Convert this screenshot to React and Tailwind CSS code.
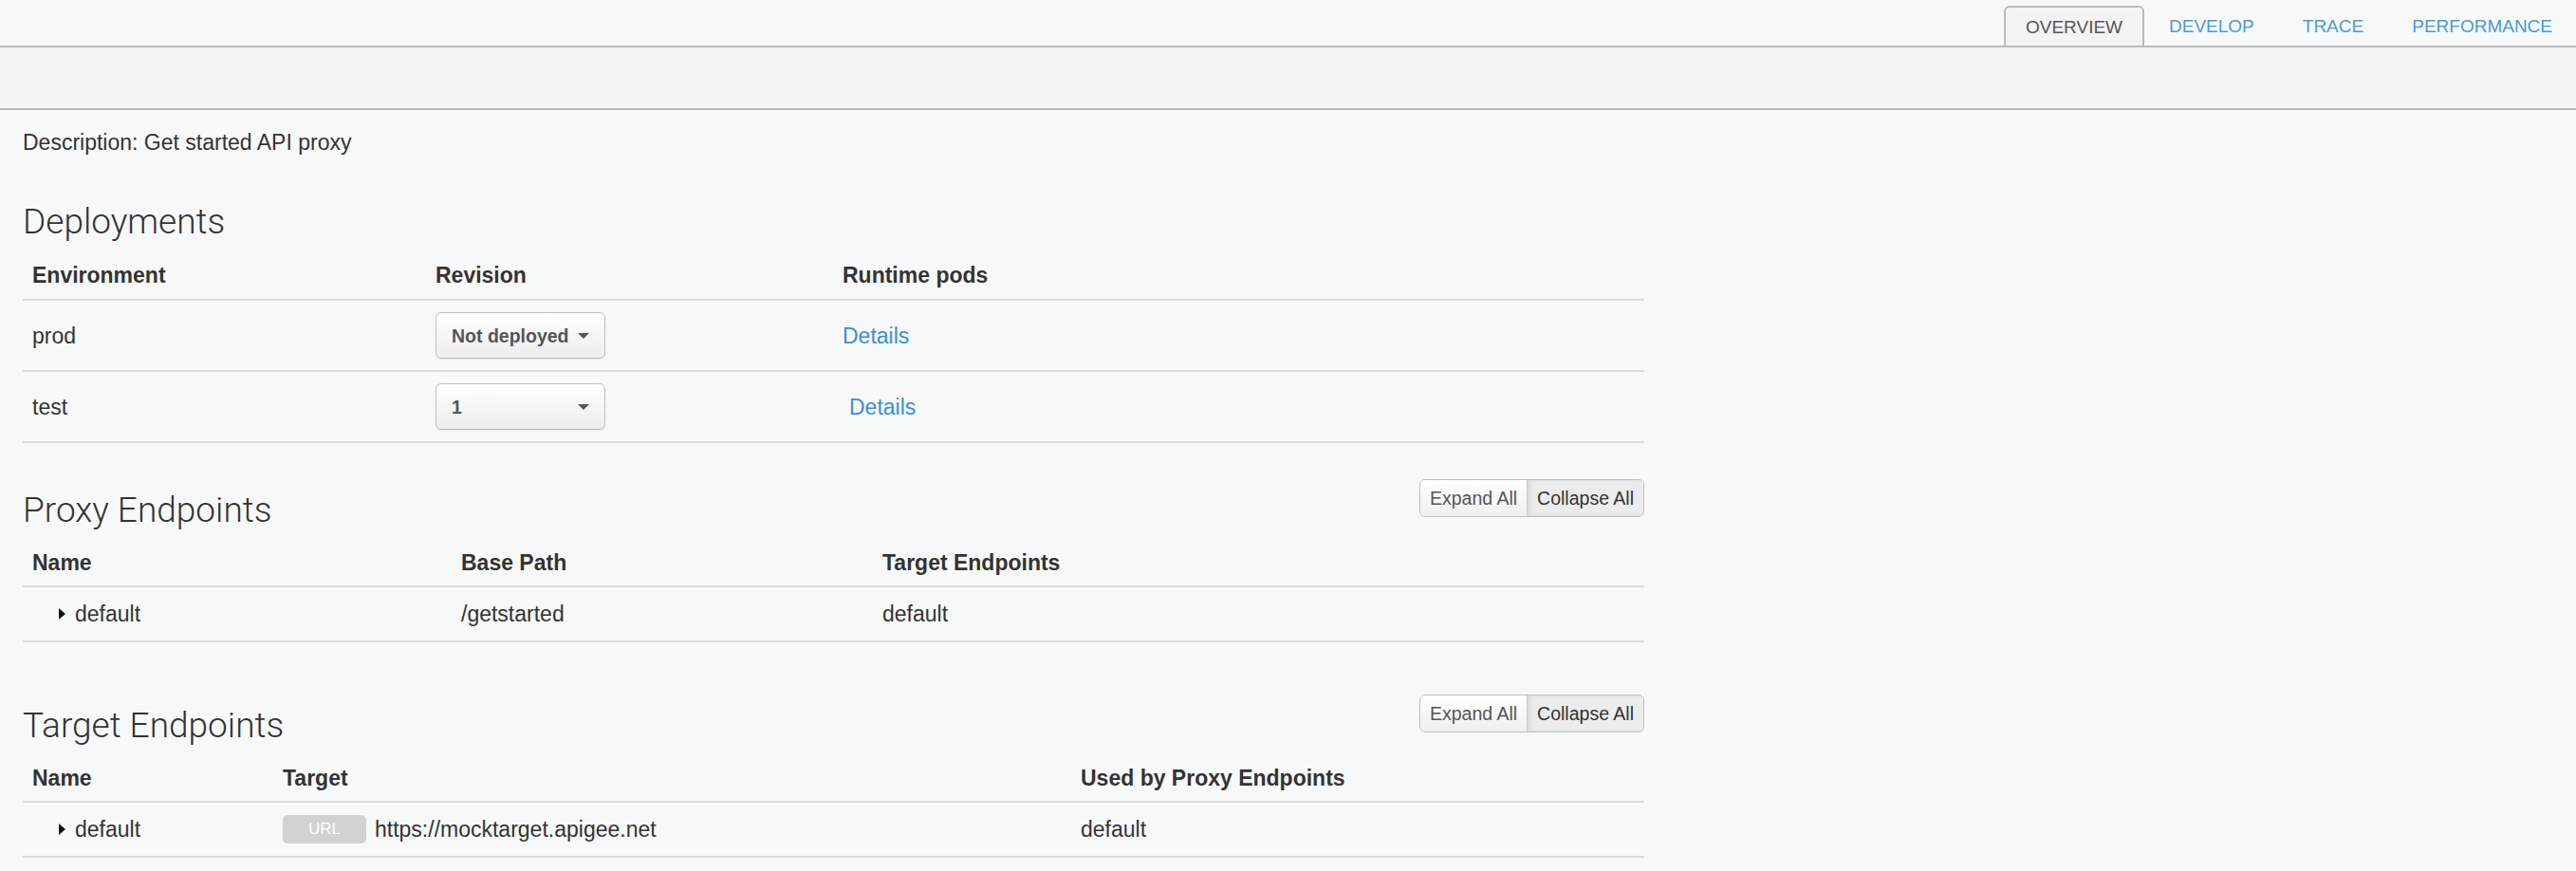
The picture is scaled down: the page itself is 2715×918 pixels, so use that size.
import React from 'react';

const sans = "font-['Liberation_Sans',Arial,sans-serif]";
const light = "font-['Roboto','Liberation_Sans',Arial,sans-serif] font-light";

const tabs = ['OVERVIEW', 'DEVELOP', 'TRACE', 'PERFORMANCE'];

const Caret = () => (
  <span className="w-0 h-0 border-x-[6px] border-x-transparent border-t-[6px] border-t-[#555]" />
);

const Arrow = () => (
  <span className="ml-[28px] mr-[10px] w-0 h-0 border-y-[6px] border-y-transparent border-l-[7px] border-l-[#111]" />
);

const Select = ({ value }) => (
  <div className="w-[179px] h-[49px] flex items-center justify-between px-[16px] rounded-[6px] border-[1.5px] border-[#b9c0c4] bg-gradient-to-b from-white to-[#ededed] shadow-[0_1px_1px_rgba(0,0,0,0.08)]">
    <span className="text-[19.5px] font-bold text-[#555]">{value}</span>
    <Caret />
  </div>
);

const ExpandCollapse = () => (
  <div className="flex h-[40px] rounded-[6px] border-[1.5px] border-[#b9c0c4] overflow-hidden text-[19.5px]">
    <button className="px-[10px] bg-gradient-to-b from-white to-[#efefef] text-[#555]">Expand All</button>
    <button className="px-[10px] bg-[#ececec] border-l border-[#c8cccf] shadow-[inset_3px_0_4px_rgba(0,0,0,0.08)] text-[#333]">Collapse All</button>
  </div>
);

const SectionHead = ({ title, buttons }) => (
  <div className="flex justify-between items-start">
    <h2 className={`mt-[12px] h-[41px] leading-[41px] text-[37px] text-[#333] ${light}`}>{title}</h2>
    {buttons && <ExpandCollapse />}
  </div>
);

export default function App() {
  return (
    <div className={`min-h-[918px] bg-[#f7f9f9] text-[#333] ${sans}`}>
      {/* tab bar */}
      <div className="h-[50px] border-b-2 border-[#bbb] flex justify-end items-end gap-[1px]">
        {tabs.map((t, i) => (
          <div
            key={t}
            className={
              i === 0
                ? 'h-[42px] px-[21px] pt-[3px] flex items-center rounded-t-[6px] border-2 border-b-0 border-[#bbb] bg-[#f4f4f4] text-[19px] text-[#555]'
                : 'h-[42px] px-[25px] pt-[3px] flex items-center text-[19px] text-[#4b9bd5]'
            }
          >
            {t}
          </div>
        ))}
      </div>
      <div className="h-[66px] bg-[#f4f4f4] border-b-2 border-[#bbb]" />

      <div className="px-[24px] pt-[18px] w-[1757px] text-[23px] leading-[32px]">
        <p>Description: Get started API proxy</p>

        {/* Deployments */}
        <h2 className={`mt-[47px] h-[41px] leading-[41px] text-[37px] text-[#333] ${light}`}>Deployments</h2>
        <div className="grid grid-cols-[425px_429px_1fr] pt-[20px] pb-[9px] border-b-2 border-[#dcdede] font-bold">
          <div className="px-[10px]">Environment</div>
          <div className="px-[10px]">Revision</div>
          <div className="px-[10px]">Runtime pods</div>
        </div>
        {[
          { env: 'prod', rev: 'Not deployed', shift: '' },
          { env: 'test', rev: '1', shift: 'ml-[7px]' },
        ].map((r) => (
          <div key={r.env} className="grid grid-cols-[425px_429px_1fr] items-center h-[75px] border-b-2 border-[#dcdede]">
            <div className="px-[10px]">{r.env}</div>
            <div className="px-[10px]"><Select value={r.rev} /></div>
            <div className="px-[10px]"><a className={`text-[#3d8fd1] ${r.shift}`}>Details</a></div>
          </div>
        ))}

        {/* Proxy endpoints */}
        <div className="mt-[38px]">
          <SectionHead title="Proxy Endpoints" buttons />
        </div>
        <div className="grid grid-cols-[452px_444px_1fr] pt-[19px] pb-[8px] border-b-2 border-[#dcdede] font-bold">
          <div className="px-[10px]">Name</div>
          <div className="px-[10px]">Base Path</div>
          <div className="px-[10px]">Target Endpoints</div>
        </div>
        <div className="grid grid-cols-[452px_444px_1fr] items-center h-[58px] border-b-2 border-[#dcdede]">
          <div className="px-[10px] flex items-center"><Arrow />default</div>
          <div className="px-[10px]">/getstarted</div>
          <div className="px-[10px]">default</div>
        </div>

        {/* Target endpoints */}
        <div className="mt-[55px]">
          <SectionHead title="Target Endpoints" buttons />
        </div>
        <div className="grid grid-cols-[264px_841px_1fr] pt-[19px] pb-[8px] border-b-2 border-[#dcdede] font-bold">
          <div className="px-[10px]">Name</div>
          <div className="px-[10px]">Target</div>
          <div className="px-[10px]">Used by Proxy Endpoints</div>
        </div>
        <div className="grid grid-cols-[264px_841px_1fr] items-center h-[58px] border-b-2 border-[#dcdede]">
          <div className="px-[10px] flex items-center"><Arrow />default</div>
          <div className="px-[10px] flex items-center">
            <span className="w-[88px] h-[30px] mr-[9px] rounded-[5px] bg-[#d2d2d2] text-white text-[17px] leading-[30px] text-center">URL</span>
            https://mocktarget.apigee.net
          </div>
          <div className="px-[10px]">default</div>
        </div>
      </div>
    </div>
  );
}
